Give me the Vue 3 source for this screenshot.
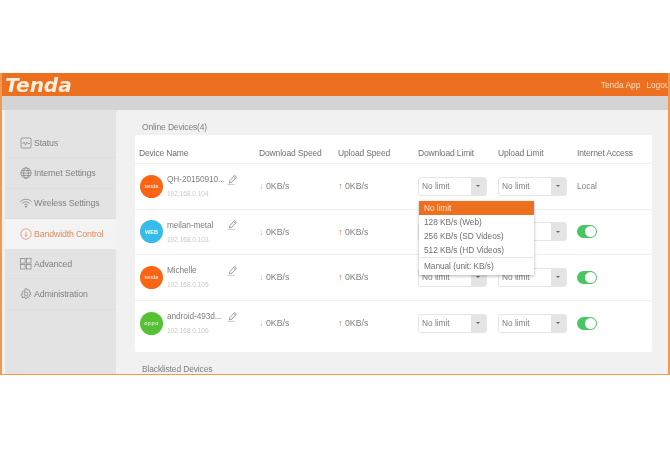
<script setup>
const menu = [
  { name: 'Status', icon: 'status' },
  { name: 'Internet Settings', icon: 'globe' },
  { name: 'Wireless Settings', icon: 'wifi' },
  { name: 'Bandwidth Control', icon: 'gauge', active: true },
  { name: 'Advanced', icon: 'grid' },
  { name: 'Administration', icon: 'gear' }
]
const heads = ['Device Name', 'Download Speed', 'Upload Speed', 'Download Limit', 'Upload Limit', 'Internet Access']
const devices = [
  { name: 'QH-20150910...', ip: '192.168.0.104', color: '#fb6412', logo: 'tenda', access: 'Local' },
  { name: 'meilan-metal', ip: '192.168.0.103', color: '#35bce8', logo: 'WEB', access: '' },
  { name: 'Michelle', ip: '192.168.0.105', color: '#fb6412', logo: 'tenda', access: '' },
  { name: 'android-493d...', ip: '192.168.0.106', color: '#55c234', logo: 'oppo', access: '' }
]
const options = ['128 KB/s (Web)', '256 KB/s (SD Videos)', '512 KB/s (HD Videos)']
</script>

<template>
  <div class="page">
    <div class="frame">
      <header class="top">
        <span class="logo">Tenda</span>
        <nav class="links"><span>Tenda App</span><span>Logout</span></nav>
      </header>
      <div class="strip"></div>
      <div class="body">
        <aside class="side">
          <div v-for="m in menu" :key="m.name" class="item" :class="{ active: m.active }">
            <svg class="ico" viewBox="0 0 12 12" fill="none" stroke="currentColor" stroke-width=".7">
              <template v-if="m.icon === 'status'">
                <rect x="1" y="1" width="10" height="10" rx="1" />
                <path d="M2.500 7l1.500-2 1.500 3 1.500-3 1 1.500h2" />
              </template>
              <template v-else-if="m.icon === 'globe'">
                <circle cx="6" cy="6" r="5.200" />
                <ellipse cx="6" cy="6" rx="2.300" ry="5.200" />
                <path d="M1 6h10M1.700 3.500h8.600M1.700 8.500h8.600" />
              </template>
              <template v-else-if="m.icon === 'wifi'">
                <path d="M.3 4.600a8 8 0 0 1 11.400 0M2.300 6.400a5.200 5.200 0 0 1 7.400 0M4.200 8a2.500 2.500 0 0 1 3.600 0" />
                <circle cx="6" cy="9.600" r=".6" fill="currentColor" />
              </template>
              <template v-else-if="m.icon === 'gauge'">
                <circle cx="6" cy="6" r="5.200" />
                <path d="M6 6.800V3.600" />
                <circle cx="6" cy="7.600" r=".8" />
              </template>
              <template v-else-if="m.icon === 'grid'">
                <rect x=".5" y=".5" width="4.600" height="4.600" />
                <rect x="6.400" y=".5" width="4.600" height="4.600" />
                <rect x=".5" y="6.400" width="4.600" height="4.600" />
                <rect x="6.400" y="6.400" width="4.600" height="4.600" />
              </template>
              <template v-else>
                <path d="M5 .8h2l.3 1.500 1.300-.7 1.400 1.400-.8 1.300 1.500.4v1.800l-1.500.4.8 1.300-1.400 1.400-1.300-.8-.3 1.500H5l-.3-1.500-1.300.8L2 9.600l.8-1.300-1.500-.4V6.100l1.500-.4L2 4.400 3.400 3l1.300.7z" />
                <circle cx="6" cy="6" r="1.800" />
              </template>
            </svg>
            <span>{{ m.name }}</span>
          </div>
        </aside>
        <main class="main">
          <h2 class="title">Online Devices(4)</h2>
          <section class="card">
            <div class="row head">
              <span v-for="h in heads" :key="h">{{ h }}</span>
            </div>
            <div v-for="d in devices" :key="d.ip" class="row dev">
              <div class="device">
                <span class="avatar" :class="d.logo" :style="{ background: d.color }">{{ d.logo }}</span>
                <div class="who">
                  <span class="name">{{ d.name }}</span>
                  <span class="ip">{{ d.ip }}</span>
                </div>
                <svg class="pen" viewBox="0 0 12 12" fill="none" stroke="#8a8a8a" stroke-width=".9">
                  <path d="M3.200 7.200L8.300 1.500l2 1.800-5 5.600-2.600.8zM7.300 2.700l2 1.800" />
                  <path d="M.5 11.300h8" stroke="#bbb" />
                </svg>
              </div>
              <span class="speed"><i class="down">↓</i> 0KB/s</span>
              <span class="speed"><i class="up">↑</i> 0KB/s</span>
              <div class="select"><span>No limit</span><b class="caret"></b></div>
              <div class="select"><span>No limit</span><b class="caret"></b></div>
              <span v-if="d.access" class="access">{{ d.access }}</span>
              <span v-else class="toggle"><i></i></span>
            </div>
            <ul class="drop">
              <li class="sel">No limit</li>
              <li v-for="o in options" :key="o">{{ o }}</li>
              <li class="manual">Manual (unit: KB/s)</li>
            </ul>
          </section>
          <h2 class="title">Blacklisted Devices</h2>
        </main>
      </div>
    </div>
  </div>
</template>

<style>
html, body { margin: 0; background: #fff; }
</style>

<style scoped>
.page {
  width: 670px;
  height: 450px;
  padding-top: 73px;
  box-sizing: border-box;
  font-family: "Liberation Sans", Arial, sans-serif;
  color: #666;
  overflow: hidden;
}
.frame {
  height: 302px;
  box-sizing: border-box;
  border: solid #ee9a52;
  border-width: 0 2px 1px;
  background: #f0f0f0;
  overflow: hidden;
  display: flex;
  flex-direction: column;
  filter: blur(.3px);
}
.top {
  height: 23px;
  flex: none;
  margin: 0 -2px;
  background: #ec7020;
  display: flex;
  align-items: center;
  justify-content: space-between;
  overflow: hidden;
}
.logo {
  margin-left: 5px;
  font: italic bold 20px "DejaVu Sans", sans-serif;
  color: #fdeedd;
}
.links {
  display: flex;
  gap: 6px;
  font-size: 8.400px;
  color: #fbdcc0;
  margin-right: -2px;
}
.strip { height: 14px; flex: none; background: #d4d4d4; }
.body { flex: 1; display: flex; min-height: 0; padding-left: 3px; }
.side {
  width: 114px;
  flex: none;
  padding: 18px 3px 0 0;
  margin-right: -3px;
  background: #e3e3e3;
  box-sizing: border-box;
}
.item {
  height: 30.300px;
  padding-left: 15px;
  display: flex;
  align-items: center;
  gap: 2px;
  font-size: 8.800px;
  letter-spacing: -.15px;
  color: #808080;
  box-sizing: border-box;
  border-bottom: 1px solid #dedede;
}
.item.active { background: #f3f3f3; color: #e08a5c; border-bottom: 0; }
.ico { width: 12px; height: 12px; flex: none; }
.main {
  flex: 1;
  min-width: 0;
  padding: 11px 16px 0 19px;
  position: relative;
  background: #f1f1f1;
  border-top-left-radius: 4px;
}
.title {
  margin: 0 0 0 7px;
  height: 13px;
  line-height: 13px;
  font-size: 8.500px;
  letter-spacing: -.15px;
  font-weight: normal;
  color: #808080;
}
.card + .title { margin-top: 11px; }
.card {
  position: relative;
  background: #fff;
  height: 217px;
  margin-top: 1px;
  border-radius: 2px;
}
.row {
  display: grid;
  grid-template-columns: 120px 79px 80px 80px 79px 1fr;
  align-items: center;
  border-bottom: 1px solid #f0f0f0;
  box-sizing: border-box;
}
.head { height: 29px; font-size: 8.500px; letter-spacing: -.15px; color: #707070; padding: 8px 0 0 4px; }
.dev { height: 45.500px; font-size: 8px; padding-left: 4px; }
.dev:last-of-type { border-bottom: 0; }
.device { display: flex; align-items: center; position: relative; margin-left: 1px; }
.avatar {
  width: 23px;
  height: 23px;
  border-radius: 50%;
  flex: none;
  color: #fff;
  font-size: 5.500px;
  display: flex;
  align-items: center;
  justify-content: center;
}
.avatar.oppo { letter-spacing: .6px; }
.avatar.WEB { font-weight: bold; }
.who { display: flex; flex-direction: column; margin-left: 4px; gap: 6px; }
.name { font-size: 8.300px; letter-spacing: -.1px; color: #808080; line-height: 9px; white-space: nowrap; }
.ip { font-size: 6.500px; color: #c8c8c8; line-height: 7px; white-space: nowrap; }
.pen { position: absolute; left: 87px; top: -1px; width: 11px; height: 11px; }
.speed { color: #808080; font-size: 8.800px; }
.speed i { font-style: normal; font-size: 9px; }
.down { color: #e3b76d; }
.up { color: #e0704a; }
.select {
  width: 69px;
  height: 19px;
  box-sizing: border-box;
  border: 1px solid #e6e6e6;
  border-radius: 3px;
  background: linear-gradient(to right, #fff 0 52px, #e4e4e4 52px);
  display: flex;
  align-items: center;
  justify-content: space-between;
  padding: 0 6px 0 3px;
  color: #808080;
  font-size: 8.300px;
}
.caret {
  width: 0;
  height: 0;
  border: 2px solid transparent;
  border-top: 2.500px solid #666;
  border-bottom: 0;
}
.access { color: #808080; font-size: 8.300px; }
.toggle {
  width: 20px;
  height: 13px;
  border-radius: 7px;
  background: #4ac563;
  position: relative;
  display: block;
}
.toggle i {
  position: absolute;
  right: 1px;
  top: 1px;
  width: 11px;
  height: 11px;
  border-radius: 50%;
  background: #fff;
}
.drop {
  position: absolute;
  left: 284px;
  top: 66px;
  width: 115px;
  margin: 0;
  padding: 0;
  list-style: none;
  background: #fff;
  box-shadow: 0 1px 3px rgba(0, 0, 0, .3);
  font-size: 8.300px;
  letter-spacing: -.05px;
  color: #707070;
}
.drop li { height: 14px; line-height: 14px; padding-left: 5px; }
.drop .sel { background: #ec7020; color: #fde3cc; }
.drop .manual { height: 18px; line-height: 17px; border-top: 1px solid #e6e6e6; box-sizing: border-box; }
</style>
